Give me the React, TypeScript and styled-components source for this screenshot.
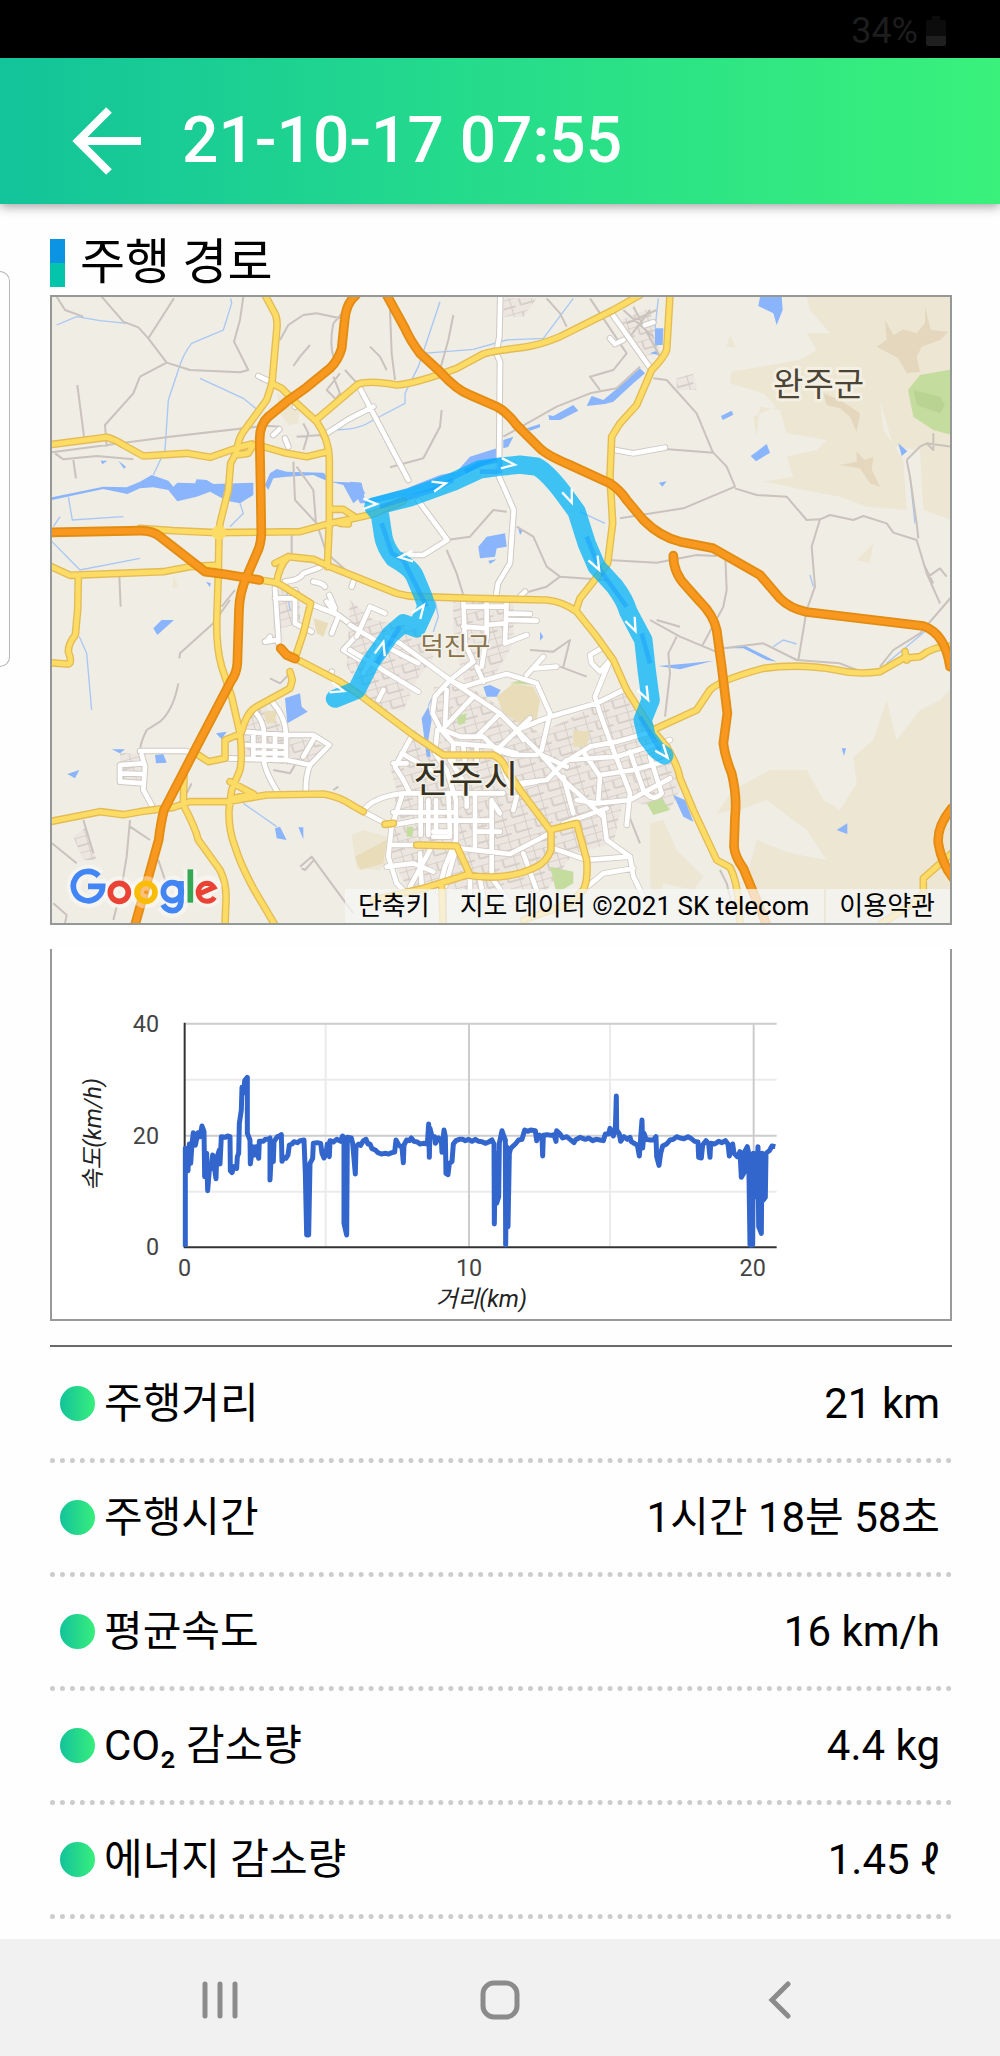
import React from "react";
import styled, { createGlobalStyle } from "styled-components";

const SANS = `Roboto, "Noto Sans CJK KR", "Noto Sans", sans-serif`;

const GlobalStyle = createGlobalStyle`
  *, *::before, *::after { box-sizing: border-box; }
  body { margin: 0; background: #fff; color: #000; font-family: ${SANS}; }
`;

const Screen = styled.div`
  position: relative;
  display: flex;
  flex-direction: column;
  min-height: 100vh;
  background: #fefefe;
`;

const StatusBar = styled.div`
  display: flex;
  align-items: center;
  justify-content: flex-end;
  gap: 8px;
  height: 58px;
  padding: 4px 54px 0 0;
  background: #000;
  color: #1d1d1d;
  font-size: 36px;
  line-height: 40px;
`;

const Header = styled.header`
  display: flex;
  align-items: center;
  gap: 40px;
  height: 146px;
  padding: 20px 70px 0;
  background: linear-gradient(90deg, #13c39a 0%, #24da8c 45%, #39f17b 100%);
  box-shadow: 0 3px 10px rgba(0, 0, 0, 0.35);
`;

const IconButton = styled.button`
  display: flex;
  align-items: center;
  justify-content: center;
  padding: 0;
  border: 0;
  background: none;
  cursor: pointer;
`;

const Title = styled.h1`
  margin: 0;
  color: #fff;
  font-size: 64px;
  font-weight: 500;
  line-height: 80px;
  white-space: nowrap;
`;

const DrawerEdge = styled.div`
  position: absolute;
  top: 271px;
  left: 0;
  width: 10px;
  height: 396px;
  border: 1px solid #b5b5b5;
  border-left: 0;
  border-radius: 0 12px 12px 0;
`;

const Content = styled.main`
  flex: 1;
  display: flex;
  flex-direction: column;
  gap: 24px;
  padding: 28px 48px 20px 50px;
`;

const RouteSection = styled.section`
  display: flex;
  flex-direction: column;
  gap: 2px;
`;

const SectionTitle = styled.h2`
  display: flex;
  align-items: center;
  gap: 15px;
  height: 61px;
  margin: 0;
  font-size: 49px;
  font-weight: 400;
  line-height: 60px;

  &::before {
    content: "";
    width: 15px;
    height: 48px;
    background: linear-gradient(#0a94e2 50%, #04c4ac 50%);
  }
`;

const MapFrame = styled.div`
  position: relative;
  border: 2px solid #949896;
  background: #efede4;
`;

const Drawing = styled.svg`
  display: block;
  width: 100%;
  height: auto;
`;

const Attribution = styled.div`
  position: absolute;
  right: 0;
  bottom: 0;
  display: flex;
  font-size: 26px;
  line-height: 34px;
  background: rgba(245, 245, 245, 0.75);
`;

const attributionItem = `
  padding: 0 15px 0 13px;
  border: 0;
  border-right: 2px solid rgba(236, 230, 212, 0.9);
  background: none;
  color: #000;
  font-family: inherit;
  font-size: inherit;
  line-height: inherit;
  text-decoration: none;
  white-space: nowrap;
`;
const Shortcuts = styled.button`${attributionItem}`;
const MapData = styled.span`${attributionItem}`;
const Terms = styled.a`${attributionItem} border-right: 0;`;

const ChartFrame = styled.section`
  border: solid #999;
  border-width: 0 2px 2px;
  background: #fff;
`;

const Stats = styled.dl`
  margin: 0;
  padding-top: 2px;
  border-top: 2px solid #6a6a6a;
`;

const Row = styled.div`
  display: flex;
  align-items: center;
  justify-content: space-between;
  height: 114px;
  padding: 0 12px 0 10px;
  border-bottom: 5px dotted #ccc;
  font-size: 42px;
  line-height: 60px;
`;

const Label = styled.dt`
  display: flex;
  align-items: center;
  gap: 9px;

  &::before {
    content: "";
    width: 35px;
    height: 35px;
    border-radius: 50%;
    background: linear-gradient(90deg, #13c39a, #37ee7c);
  }
`;

const Value = styled.dd`
  margin: 0;
`;

const NavBar = styled.nav`
  display: grid;
  grid-template-columns: repeat(3, 1fr);
  align-items: center;
  justify-items: center;
  height: 117px;
  padding: 4px 80px 0;
  background: #f1f1f1;
`;

type Lines = { d: string[]; edge: string; fill: string; outer: number; inner: number };

function Roads({ d, edge, fill, outer, inner }: Lines) {
  const path = d.join(" ");
  return (
    <g fill="none" strokeLinecap="round" strokeLinejoin="round">
      <path d={path} stroke={edge} strokeWidth={outer} />
      <path d={path} stroke={fill} strokeWidth={inner} />
    </g>
  );
}

const motorways = [
  "M948 15Q918 40 914 90L905 175Q895 210 870 235L800 292 740 335 685 380Q658 405 659 450L662 600 664 730Q663 765 650 790L620 860Q598 910 597 960L592 1120Q590 1150 572 1175L470 1370 372 1560Q362 1600 356 1650L320 1780 285 1905",
  "M30 727L300 722Q340 722 360 740L495 845 550 852 658 870",
  "M1040 15L1095 115Q1110 150 1140 190L1200 245Q1250 300 1290 315L1370 350Q1400 365 1430 405L1500 475Q1520 495 1590 525L1710 580Q1740 600 1760 630L1810 690Q1860 740 1920 755L2020 775 2160 855 2220 925Q2250 955 2300 966L2650 1008Q2715 1030 2730 1130",
  "M1900 797Q1900 850 1940 890L1980 935Q2020 975 2030 1020L2045 1130 2062 1270 2050 1360Q2055 1400 2075 1450 2092 1520 2085 1580L2082 1670Q2085 1700 2110 1735L2180 1905",
  "M2735 1555Q2690 1610 2695 1660 2705 1720 2740 1765",
  "M722 1075L740 1095 765 1106",
];

const trunks = [
  "M675 15L707 75Q712 90 711 110L696 280 680 330 610 425Q595 445 590 485L572 520 565 600 540 700 537 735",
  "M30 464L200 442Q225 448 250 465L310 498 440 490 510 502 590 474 635 462",
  "M590 495L625 490 640 465",
  "M670 470L740 490 800 500 860 486",
  "M695 280L725 295 770 340 830 395Q868 450 868 510L868 700 862 830",
  "M828 390L955 282Q990 270 1070 285 1130 280 1250 235L1330 192Q1350 184 1450 172 1500 165 1560 140L1720 60 1800 15",
  "M300 715L400 722 530 728 780 725 870 700 920 690 1000 672 1090 632",
  "M872 658L910 658 940 678M900 700L925 702",
  "M30 828L90 856 370 845 450 830 535 825",
  "M115 860L113 960 106 1035Q85 1060 85 1085 100 1125 80 1122L30 1118",
  "M537 735L535 850 530 1000Q530 1080 545 1130L575 1220 600 1330Q608 1400 600 1440L575 1500 567 1560Q565 1620 585 1670 600 1720 640 1795L705 1905",
  "M705 820L745 800 820 808 870 830 960 866 1070 910Q1110 922 1150 920L1300 925 1520 930Q1570 935 1610 965L1670 1040 1720 1110 1760 1200 1830 1310 1880 1370Q1915 1430 1920 1465L1960 1560 2030 1710 2070 1732Q2090 1770 2096 1840L2100 1905",
  "M745 800Q715 830 710 880M660 870L712 878 812 940 790 1030 765 1105 900 1175 960 1215 1120 1335 1210 1395 1360 1395Q1390 1410 1400 1440L1440 1500 1530 1620 1610 1600 1640 1710Q1645 1770 1630 1800L1590 1840 1450 1890",
  "M1533 1620L1533 1680Q1520 1715 1490 1730 1400 1775 1280 1755L1150 1795 1000 1830",
  "M1130 1665L1250 1668 1290 1755M1205 1790L1210 1900",
  "M30 1595L180 1565 250 1574 300 1565 400 1552 450 1535 560 1535 680 1515 850 1512Q900 1520 940 1548L970 1565M1035 1603L1060 1600",
  "M432 1450L430 1545Q465 1610 475 1650L540 1740Q560 1780 558 1830L555 1905",
  "M600 1332L555 1350 555 1405 505 1415 475 1395",
  "M605 1325Q620 1265 650 1250L750 1195 757 1170 750 1145",
  "M570 1475L640 1512 580 1525",
  "M1890 15L1880 180Q1870 205 1835 240L1790 345 1740 400 1715 440 1710 560 1718 700 1703 820 1660 875 1620 925 1608 960",
  "M1850 1315L1970 1260 2010 1200Q2040 1170 2170 1135 2280 1120 2390 1140 2450 1155 2520 1145L2590 1105 2640 1100Q2680 1068 2735 1068M2595 1085L2600 1110",
  "M2735 1690L2650 1765 2650 1810 2620 1840 2525 1900",
];

const streets = [
  "M1381 15L1378 140 1369 190 1380 215 1377 560 1395 600 1421 660 1410 820 1374 880 1368 920",
  "M960 295L1105 570M1135 632L1222 750 1150 795 1090 795M1000 350L925 388 850 437",
  "M1715 70L1835 240M1710 145L1725 162 1750 150M1815 105L1840 97",
  "M1725 480L1780 490 1875 473M655 258L690 275M770 340L765 350",
  "M700 435L718 418M735 445L745 470M1440 920L1455 905",
  "M735 875Q780 870 790 850L840 832M820 875Q850 880 855 890M868 915L885 955M940 875L935 890",
  "M705 895L715 1040 715 1060M765 900L765 1000 815 1025M705 925L765 925M675 1055L710 1050M690 1040L680 1055",
  "M300 1383L440 1383 455 1392M305 1395L315 1430 310 1500 335 1545M310 1420L240 1425 240 1475 310 1480M245 1450L305 1452",
  "M700 1240Q735 1280 738 1330L738 1410M645 1265Q675 1300 672 1340L672 1410Q672 1440 715 1510M610 1325L735 1335 820 1335 868 1365 810 1425Q795 1460 798 1510M565 1405L740 1410 810 1425M640 1335L640 1405M610 1365L735 1370M825 1340L790 1400M705 1335L705 1410M640 1388L735 1390",
  "M820 945L895 975 960 1025M895 980L875 1030M860 935L895 980M960 1025L910 1080 960 1110M875 1145L870 1160",
];

const cityStreets = [
  "M0 75L90 130 205 190M0 150L205 275M60 20L105 40M60 20L20 110M90 130L40 220M100 270L85 300",
  "M110 110L150 130 300 240 450 340 570 460 640 540 760 650",
  "M300 240L370 185 345 130 340 0M410 0L410 110 395 200M340 80L410 85M340 20L465 20",
  "M470 0L465 130 530 105M410 75L465 70M475 60L560 62M475 40L540 42",
  "M300 240L340 260 405 240 470 222 530 240 560 250 600 340 575 450M530 225L580 170M555 205L620 200",
  "M300 240L255 290 248 340 270 385 330 410 400 410 440 450 490 465 560 465M290 270L285 380",
  "M370 290L290 375M380 200L400 245M450 340L380 410M540 355L440 450M500 390L520 420",
  "M262 390L255 460 290 510 318 600 318 720 285 800 265 875M300 480L350 560",
  "M270 385L310 430 310 490M310 430L430 440 500 460M340 440L345 490M380 440L380 495",
  "M500 390L600 350 740 310 830 265M780 180L735 290 750 340 790 450 840 580 830 675",
  "M780 180L750 215 725 190 720 165 755 145",
  "M640 490L720 440 800 425 890 400M700 455L750 530 745 600",
  "M500 550L590 540 650 480 800 470 960 420M750 525L850 510 960 480M740 610L840 600 960 535",
  "M840 455L880 570Q910 610 935 580L900 470M640 530L670 640M575 465L650 500",
  "M190 400L135 500 160 540 180 580M155 460L260 520M130 490L170 490",
  "M40 632Q70 590 160 580L460 580M40 635L110 672M130 637L310 637M130 675L200 662 420 662",
  "M155 590L125 680 115 770 140 850 170 880M120 735L200 735M110 800L190 790 250 815M180 860L240 750M210 760L215 860",
  "M212 590L212 705M235 600L235 705M258 600L258 690M250 695L300 695M250 710L300 710M295 580L300 700",
  "M350 570L350 620M375 580L375 740M425 600L425 825M330 745L480 762 600 700M380 695L450 695",
  "M430 610L450 640M500 590L490 630M430 840L480 910M520 760L560 870M360 830L360 890M390 840L400 890",
  "M760 640L770 720 840 770 850 830 880 890M610 745L710 780 840 770M700 870L760 820 850 805M640 670L770 625",
  "M320 740L285 860M680 600L740 610M300 540L310 580M440 450L480 560 560 545",
];

const lanes = [
  "M50 20L75 60 130 80M185 20L250 95 295 112 325 145 380 218 300 260M325 145L402 25M380 218L450 240 600 247 625 240 582 155 600 90 610 20M300 260L280 310 195 405 200 470",
  "M112 285L132 440M36 487L390 440 680 407 720 410M45 490L70 508 170 498 280 508M100 510L108 565",
  "M720 150L745 105 790 75 830 70 900 85M880 100Q868 160 880 200M810 165L780 200 760 228M915 60L880 100",
  "M760 515L765 630 830 700 860 790 940 860M770 530L820 600 828 700M755 735L755 790M238 860L242 950M585 900L545 950",
  "M880 260L900 310 840 390M915 240L960 290M900 250L860 300 900 340M790 400L805 430 790 480M770 440L845 435",
  "M418 1105L420 1090 520 1000 570 930M415 1180Q400 1260 360 1295L320 1320Q300 1360 300 1383",
  "M130 1590L160 1690M270 1590L260 1700 245 1790M270 1610L330 1650M355 1710L375 1770M36 1660L110 1720M780 1730L815 1700 940 1870M785 1735L795 1740 820 1712M40 1840L80 1875 75 1900M220 1890L230 1850",
  "M1050 60L1055 190 1065 270M990 170L1020 200 1040 240M1240 75L1225 150 1200 240M1205 360L1200 410 1150 505 1050 532",
  "M1520 25L1560 70 1580 110M1650 25L1760 190 1720 240 1650 260 1680 300M1390 440L1550 350 1650 310 1730 295 1800 230M1840 265L1880 270 1970 370 2020 490",
  "M1750 60L1840 140M1780 50L1860 200M1760 100L1850 60M1770 140L1830 60",
  "M1875 477L2020 488 2060 530 2085 590 1930 655 1740 685M2085 595L2150 615 2240 620 2300 690 2340 688 2370 675 2440 690 2470 678 2540 700 2560 728 2630 750 2660 850 2700 940M2340 688L2315 770 2325 890 2300 960 2275 1110",
  "M1220 750L1290 740 1360 660 1400 665M1430 710L1480 740 1520 830 1560 860 1700 870M1220 780L1250 850 1270 915M1560 860L1520 890 1450 910M1705 810L1850 818 1970 795 2030 798",
  "M2600 510L2610 560 2630 700 2635 745M2600 510L2640 470 2660 460 2680 480 2680 430M2660 460L2735 470M2665 860L2700 835 2720 860M2650 820L2680 880",
  "M2056 800L2060 900 2050 950 1985 1070M1830 990L1920 1040 2040 1090M1910 1040L1885 1090 1890 1150 1875 1280M2050 1075L2170 1060 2270 1110 2400 1120 2450 1140M2735 920L2640 1030 2560 1080 2520 1130",
  "M2040 1740L2060 1780 2080 1860M700 1440L750 1450 765 1425M690 1165L720 1180 750 1150M880 1500L895 1490M440 1510L455 1480",
  "M1470 1080L1540 1085 1590 1050 1570 1130M1560 1130L1640 1160M1850 990L1920 1010M1760 1560L1800 1660",
];

const rivers = [
  "36 622 190 590 260 592 300 575 335 555 385 572 400 590 412 578 465 580 470 568 500 570 520 582 640 578 640 615 600 640 560 632 510 605 470 620 412 634 385 600 340 592 300 595 262 612 190 597 36 630",
  "675 585 690 550 710 537 740 545 850 548 880 575 960 578 975 610 940 640 910 585 860 572 820 555 740 560 700 565 685 600",
  "930 575 965 578 975 630 1100 595 1200 555 1250 545 1290 500 1370 475 1368 510 1290 545 1180 600 1000 640 960 640",
  "1390 450 1420 440 1405 470 1390 475", "1460 415 1500 402 1500 412 1470 422", "1525 375 1540 378 1600 345 1615 362 1560 390 1528 390",
  "1640 348 1655 318 1690 330 1750 280 1800 235 1815 250 1780 280 1720 335 1695 342", "1845 115 1870 115 1868 165 1845 165", "1830 190 1850 182 1860 196",
  "2160 21 2225 21 2228 60 2210 105 2200 70 2155 48", "2043 378 2075 362 2080 374 2048 390", "2132 498 2150 485 2180 462 2190 488 2148 514",
  "2575 460 2602 484 2585 498", "1857 578 1880 574 1867 590",
  "1315 770 1340 740 1395 730 1400 770 1370 775 1365 800 1320 805", "1345 812 1370 808 1350 822", "1435 715 1448 722 1440 735",
  "735 1225 780 1210 785 1250 803 1265 742 1300", "340 1015 365 990 402 990 352 1035", "528 1330 560 1325 545 1348",
  "345 1395 370 1392 380 1418 348 1420", "82 1452 118 1440 105 1465", "215 1378 255 1378 240 1390", "705 1615 720 1610 740 1650 710 1645", "775 1612 790 1612 790 1648",
  "1330 1190 1350 1185 1382 1200 1370 1220 1340 1220", "1500 1025 1510 1040 1500 1052",
  "1900 1515 1935 1530 1960 1595 1930 1580", "2390 1620 2422 1600 2422 1632", "2405 1375 2418 1375 2412 1398",
  "2055 1075 2110 1065 2210 1115 2180 1110 2110 1075", "1855 1128 1950 1120 2020 1112 1920 1138", "182 512 202 512 187 523", "235 512 258 530 252 536", "498 875 512 880 510 892",
  "1145 1285 1165 1250 1175 1290 1165 1350 1172 1400 1160 1400",
];

const hills = [
  "2300 21 2735 21 2735 690 2650 660 2640 480 2560 470 2520 330 2530 420 2590 510 2600 660 2480 650 2400 620 2290 600 2200 580 2170 575 2260 560 2240 500 2330 480 2360 450 2240 430 2220 360 2160 350 2150 440 2140 380 2210 350 2170 310 2070 280 2075 245 2280 210 2330 180 2300 130 2370 130 2310 60",
  "2700 1230 2730 1200 2735 1900 2180 1900 2120 1760 2150 1650 2250 1690 2360 1710 2300 1620 2180 1530 2100 1560 2030 1570 2080 1500 2190 1440 2300 1440 2350 1530 2400 1560 2450 1480 2440 1400 2500 1350 2540 1230 2570 1350 2640 1260",
  "1830 1600 1870 1590 1910 1680 1990 1760 1960 1800 1870 1780 1840 1880 1830 1760", "2060 170 2070 135 2088 172",
  "712 310 780 350 775 400 745 405 720 370", "400 855 415 890 398 895", "2450 810 2500 760 2490 820",
  "935 1635 970 1620 1040 1640 1050 1700 1020 1740 950 1735",
];

const peaks = [
  "2510 170 2540 150 2535 90 2560 135 2590 118 2630 130 2655 100 2655 50 2672 120 2725 125 2700 150 2645 170 2630 200 2640 245 2600 250 2575 205",
  "2350 310 2400 330 2460 370 2455 400 2450 425 2430 380 2400 355 2360 345", "2400 525 2450 515 2450 485 2475 510 2500 500 2495 540 2520 590 2490 580 2460 535",
];

const builtUp = [
  "930 930 1000 990 1130 1010 1180 1100 1130 1170 1090 1260 1010 1260 920 1130",
  "1240 930 1420 930 1420 1060 1350 1180 1280 1200 1240 1050",
  "1180 1190 1290 1190 1500 1330 1680 1240 1760 1200 1870 1370 1930 1480 1890 1560 1750 1530 1720 1660 1600 1690 1520 1800 1260 1800 1100 1790 1040 1680 1070 1500 1050 1430 1110 1340 1200 1370",
  "610 1280 670 1240 740 1330 860 1370 800 1430 610 1410", "700 900 780 900 780 1000 700 1020", "240 1390 310 1390 310 1480 240 1475",
  "1390 25 1490 25 1450 80 1390 80", "1740 90 1830 55 1860 190 1800 200", "100 1640 140 1610 170 1710 130 1710", "1910 265 1960 250 1970 300 1910 300",
];

const parks = [
  "2604 300 2640 255 2735 238 2735 435 2680 420 2620 380", "1530 1730 1600 1745 1600 1780 1550 1810", "1820 1540 1865 1525 1890 1560 1840 1575", "1250 1280 1280 1270 1275 1300 1255 1305", "1100 1610 1120 1610 1118 1640 1100 1640", "1410 1180 1460 1165 1480 1185",
];

const sandy = [
  "1370 1220 1420 1180 1480 1190 1500 1230 1490 1290 1440 1300 1390 1270", "1600 1320 1650 1325 1640 1370 1600 1370", "945 1700 1040 1650 1030 1720 960 1740", "820 985 865 1000 850 1040 830 1030", "670 1265 710 1260 705 1300 680 1300", "930 1000 960 1010 945 1030",
];

const routePath =
  "M885 1226L950 1200Q960 1180 990 1120L1050 1035 1090 1000 1130 1015 1160 950 1150 920 1125 860Q1115 835 1062 805 1035 770 1030 740L1020 675 1000 650 1110 622 1240 575 1320 538 1380 530 1440 524 1490 530Q1520 545 1570 610L1610 665 1640 760 1670 830 1725 890Q1755 930 1765 965L1810 1050 1820 1140 1832 1230 1808 1290 1820 1340 1850 1380 1873 1396";

const routeArrows: [number, number, number][] = [
  [892, 1198, 15], [1025, 1075, -75], [1140, 962, -55], [1098, 800, 175], [990, 642, 0], [1198, 585, -15],
  [1404, 522, 5], [1588, 620, 68], [1668, 822, 62], [1778, 1005, 65], [1815, 1212, 62], [1870, 1388, 50],
];

const polygons = (list: string[], fill: string) => list.map((p) => <polygon key={p} points={p} fill={fill} />);

function GoogleLogo() {
  const outline =
    "M176 1758A44 44 0 1 0 189 1788L146 1788M424 1775L424 1835Q422 1860 397 1862 378 1861 370 1846M451 1738L451 1838M474 1808L524 1786A27 27 0 1 0 524 1822";
  return (
    <g fill="none" strokeWidth="17">
      <g stroke="#fff" strokeOpacity="0.4" strokeWidth="42" strokeLinejoin="round">
        <path d={outline} />
        <circle cx="238" cy="1807" r="27" />
        <circle cx="318" cy="1807" r="27" />
        <circle cx="397" cy="1805" r="27" />
      </g>
      <path d="M176 1758A44 44 0 1 0 188 1789L144 1789" stroke="#4285f4" />
      <circle cx="238" cy="1807" r="27" stroke="#ea4335" />
      <circle cx="318" cy="1807" r="27" stroke="#fbbc05" />
      <circle cx="397" cy="1805" r="27" stroke="#4285f4" />
      <path d="M423 1773L423 1835Q421 1861 397 1862 378 1861 369 1844" stroke="#4285f4" />
      <path d="M451 1738L451 1838" stroke="#34a853" />
      <path d="M477 1812L522 1792Q514 1780 500 1780A27 27 0 1 0 524 1822" stroke="#ea4335" strokeWidth="15" />
    </g>
  );
}

function RouteMap() {
  return (
    <Drawing viewBox="36 21 2694 1878" role="img" aria-label="주행 경로 지도">
      <defs>
        <pattern id="blocks" width="64" height="46" patternUnits="userSpaceOnUse" patternTransform="rotate(-16)">
          <rect width="64" height="46" fill="#ebe6df" />
          <path d="M0 0H64M0 0V46M30 0V26M30 26H64M0 26H14" stroke="#d3cbc5" strokeWidth="5" fill="none" />
        </pattern>
      </defs>
      <rect x="0" y="0" width="2760" height="1920" fill="#efede4" />
      {polygons(hills, "#ece6d3")}
      {polygons(peaks, "#e5d7be")}
      {polygons(builtUp, "url(#blocks)")}
      {polygons(parks, "#c5dc9f")}
      {polygons(sandy, "#e9dcb9")}
      <path d="M2620 300L2700 320 2715 345 2700 370 2630 345Z" fill="#b9d392" />
      {polygons(rivers, "#8ab4fb")}
      <path
        fill="none"
        stroke="#a9c7f5"
        strokeWidth="4"
        d="M50 105L110 80 180 92 260 100M572 25L575 40 550 120 455 160Q430 190 415 240L385 330 375 480 340 555M480 265L610 325 665 370M36 755L120 840 300 805M85 620L97 690 250 680M40 710L60 680M600 640L610 670 570 710M1200 35L1135 230 1095 310 1095 340 1000 390Q950 425 870 418M1150 190L1300 178 1400 150 1510 145 1600 25M1855 25L1845 115M1620 665L1695 700M118 1040L140 1090 155 1260M610 1540L710 1610M2610 560L2625 700M2310 855L2320 890M2660 1020L2540 1120M2200 1070L2230 1050 2270 1062M1185 930L1195 980 1180 1025M740 900L750 960M1165 1250Q1180 1200 1230 1190"
      />
      <path d={lanes.join(" ")} fill="none" stroke="#c9c2bd" strokeWidth="6" strokeLinejoin="round" />
      <Roads d={streets} edge="#cfc9c3" fill="#fff" outer={20} inner={14} />
      <g transform="translate(930 930)">
        <Roads d={cityStreets} edge="#d2cac4" fill="#fff" outer={19} inner={14} />
      </g>
      <Roads d={trunks} edge="#e3bb55" fill="#fddc66" outer={23} inner={15} />
      <circle cx="537" cy="728" r="22" fill="#fddc66" />
      <Roads d={motorways} edge="#e28c12" fill="#f8981f" outer={29} inner={18} />
      <path d={routePath} fill="none" stroke="#00b2fa" strokeOpacity="0.74" strokeWidth="55" strokeLinejoin="round" strokeLinecap="round" />
      <path
        d="M1275 545L1320 522 1380 510 1378 545 1320 545M1020 650L1180 600 1240 570M1025 700L1055 790 1090 810 1160 950M1640 740L1680 840 1760 950M1010 1120L1080 1010M1805 1030L1830 1120M1800 1280L1860 1380"
        fill="none"
        stroke="#0f9cff"
        strokeOpacity="0.45"
        strokeWidth="14"
        strokeLinejoin="round"
      />
      <g fill="none" stroke="#fff" strokeWidth="7">
        {routeArrows.map(([x, y, angle]) => (
          <path key={`${x}-${y}`} d="M-20 -16L20 0 -20 15" transform={`translate(${x} ${y}) rotate(${angle})`} />
        ))}
      </g>
      <g fontFamily={SANS} textAnchor="middle" paintOrder="stroke" stroke="#f6f3e8" strokeOpacity="0.8" strokeLinejoin="round">
        <text x="2336" y="318" fontSize="99" fill="#4b4436" strokeWidth="18">완주군</text>
        <text x="1246" y="1095" fontSize="76" fill="#86714e" strokeWidth="10">덕진구</text>
        <text x="1278" y="1507" fontSize="114" fill="#35301f" strokeWidth="10">전주시</text>
      </g>
      <GoogleLogo />
    </Drawing>
  );
}

const speedLine =
  "M436 920L436 625 444 692 448 612 452 670 456 612 460 578 466 616 474 578 480 590 486 558 492 575 494 710 500 640 503 752 508 690 514 685 518 645 528 716 530 655 538 630 540 672 544 590 556 592 562 588 570 590 571 692 576 698 582 680 590 685 592 650 596 640 598 550 604 510 606 442 612 458 614 422 622 412 622 580 630 600 631 672 638 620 644 645 648 620 656 655 658 604 670 604 676 598 684 598 690 594 690 720 694 640 700 665 702 605 712 590 718 588 724 584 726 664 732 652 738 655 744 645 748 615 756 612 762 605 772 608 780 602 792 600 796 700 800 885 806 885 810 670 818 655 820 610 832 608 842 610 846 640 852 654 858 640 862 612 868 650 870 602 880 606 890 598 902 604 908 588 912 600 912 850 920 885 922 592 934 594 938 610 946 702 948 620 956 612 962 616 970 602 978 598 984 612 990 612 996 626 1006 630 1014 638 1024 642 1034 640 1046 642 1056 638 1064 636 1068 600 1076 615 1086 622 1090 668 1092 615 1100 600 1108 602 1114 594 1122 604 1132 606 1140 612 1150 610 1162 612 1166 552 1168 652 1170 565 1176 590 1184 590 1186 610 1196 594 1204 600 1206 637 1212 570 1216 590 1218 700 1224 704 1228 670 1236 665 1240 612 1248 602 1258 598 1268 598 1276 602 1286 598 1296 604 1306 598 1316 604 1326 605 1336 610 1346 606 1356 600 1362 612 1363 852 1366 640 1370 790 1376 770 1378 610 1386 572 1392 590 1396 600 1397 915 1400 620 1404 860 1408 640 1412 625 1426 612 1436 600 1446 598 1454 570 1464 574 1472 570 1486 572 1490 602 1498 585 1506 590 1508 648 1510 586 1522 584 1532 586 1542 584 1548 604 1550 572 1560 582 1568 594 1580 590 1590 598 1602 608 1606 600 1620 592 1636 598 1646 594 1658 602 1668 598 1680 600 1690 602 1696 582 1706 582 1710 565 1720 588 1726 568 1729 468 1730 570 1738 582 1742 604 1752 590 1762 598 1770 592 1774 605 1786 612 1792 615 1798 648 1806 540 1808 624 1812 580 1818 598 1830 600 1840 600 1848 590 1850 650 1857 676 1862 640 1868 618 1880 612 1890 600 1900 598 1910 590 1920 594 1932 596 1944 590 1954 596 1964 604 1974 606 1976 652 1984 654 1988 615 1998 602 2006 612 2010 652 2012 610 2024 612 2036 604 2046 608 2056 602 2064 612 2068 648 2078 612 2082 640 2092 650 2100 635 2104 712 2112 698 2114 635 2122 620 2126 640 2130 915 2138 915 2140 640 2146 770 2154 620 2156 860 2164 880 2166 640 2170 780 2176 772 2178 640 2188 632 2196 618 2206 620";

function SpeedChart() {
  return (
    <Drawing viewBox="36 27 2694 1110" role="img" aria-label="거리별 속도 그래프">
      <g fill="none" strokeWidth="6">
        <path d="M434 419H2210M434 755H2210M857 251V920M1710 251V920" stroke="#ebebeb" />
        <path d="M434 251H2210M434 587H2210M1287 251V920M2141 251V920" stroke="#ccc" />
        <path d="M434 248V922H2210" stroke="#333" />
      </g>
      <path d={speedLine} fill="none" stroke="#3366cc" strokeWidth="15" strokeLinejoin="round" />
      <g fontFamily={SANS} fontSize="70" fill="#444">
        <g textAnchor="end">
          <text x="357" y="277">40</text>
          <text x="357" y="613">20</text>
          <text x="357" y="946">0</text>
        </g>
        <g textAnchor="middle">
          <text x="434" y="1008">0</text>
          <text x="1287" y="1008">10</text>
          <text x="2138" y="1008">20</text>
        </g>
      </g>
      <g fontFamily={SANS} fontSize="71" fontStyle="italic" fill="#222" textAnchor="middle">
        <text x="1324" y="1100">거리(km)</text>
        <text transform="translate(183 584) rotate(-90)">속도(km/h)</text>
      </g>
    </Drawing>
  );
}

const stats = [
  { label: "주행거리", value: "21 km" },
  { label: "주행시간", value: "1시간 18분 58초" },
  { label: "평균속도", value: "16 km/h" },
  { label: "CO₂ 감소량", value: "4.4 kg" },
  { label: "에너지 감소량", value: "1.45 ℓ" },
];

export default function App() {
  return (
    <>
      <GlobalStyle />
      <Screen>
        <StatusBar>
          <span>34%</span>
          <svg width="20" height="30" viewBox="0 0 20 30" aria-hidden="true">
            <path d="M6 0H14V4H18Q20 4 20 6V20H0V6Q0 4 2 4H6Z" fill="#0c0c0c" />
            <path d="M0 20H20V28Q20 30 18 30H2Q0 30 0 28Z" fill="#1f1f1f" />
          </svg>
        </StatusBar>
        <Header>
          <IconButton type="button" aria-label="뒤로">
            <svg width="72" height="72" viewBox="0 0 72 72" fill="none" stroke="#fff" strokeWidth="8">
              <path d="M39 5L8 36 39 67M6 36H71" />
            </svg>
          </IconButton>
          <Title>21-10-17 07:55</Title>
        </Header>
        <DrawerEdge />
        <Content>
          <RouteSection>
            <SectionTitle>주행 경로</SectionTitle>
            <MapFrame>
              <RouteMap />
              <Attribution>
                <Shortcuts type="button">단축키</Shortcuts>
                <MapData>지도 데이터 ©2021 SK telecom</MapData>
                <Terms href="#terms">이용약관</Terms>
              </Attribution>
            </MapFrame>
          </RouteSection>
          <ChartFrame>
            <SpeedChart />
          </ChartFrame>
          <Stats>
            {stats.map(({ label, value }) => (
              <Row key={label}>
                <Label>{label}</Label>
                <Value>{value}</Value>
              </Row>
            ))}
          </Stats>
        </Content>
        <NavBar>
          <IconButton type="button" aria-label="최근 앱">
            <svg width="36" height="38" viewBox="0 0 36 38" stroke="#8b8b8b" strokeWidth="5" strokeLinecap="round">
              <path d="M3 3V35M18 3V35M33 3V35" />
            </svg>
          </IconButton>
          <IconButton type="button" aria-label="홈">
            <svg width="40" height="40" viewBox="0 0 40 40" fill="none" stroke="#8b8b8b" strokeWidth="5">
              <rect x="3" y="3" width="34" height="34" rx="11" />
            </svg>
          </IconButton>
          <IconButton type="button" aria-label="뒤로 가기">
            <svg width="24" height="38" viewBox="0 0 24 38" fill="none" stroke="#8b8b8b" strokeWidth="5" strokeLinecap="round">
              <path d="M20 3L4 19 20 35" />
            </svg>
          </IconButton>
        </NavBar>
      </Screen>
    </>
  );
}
